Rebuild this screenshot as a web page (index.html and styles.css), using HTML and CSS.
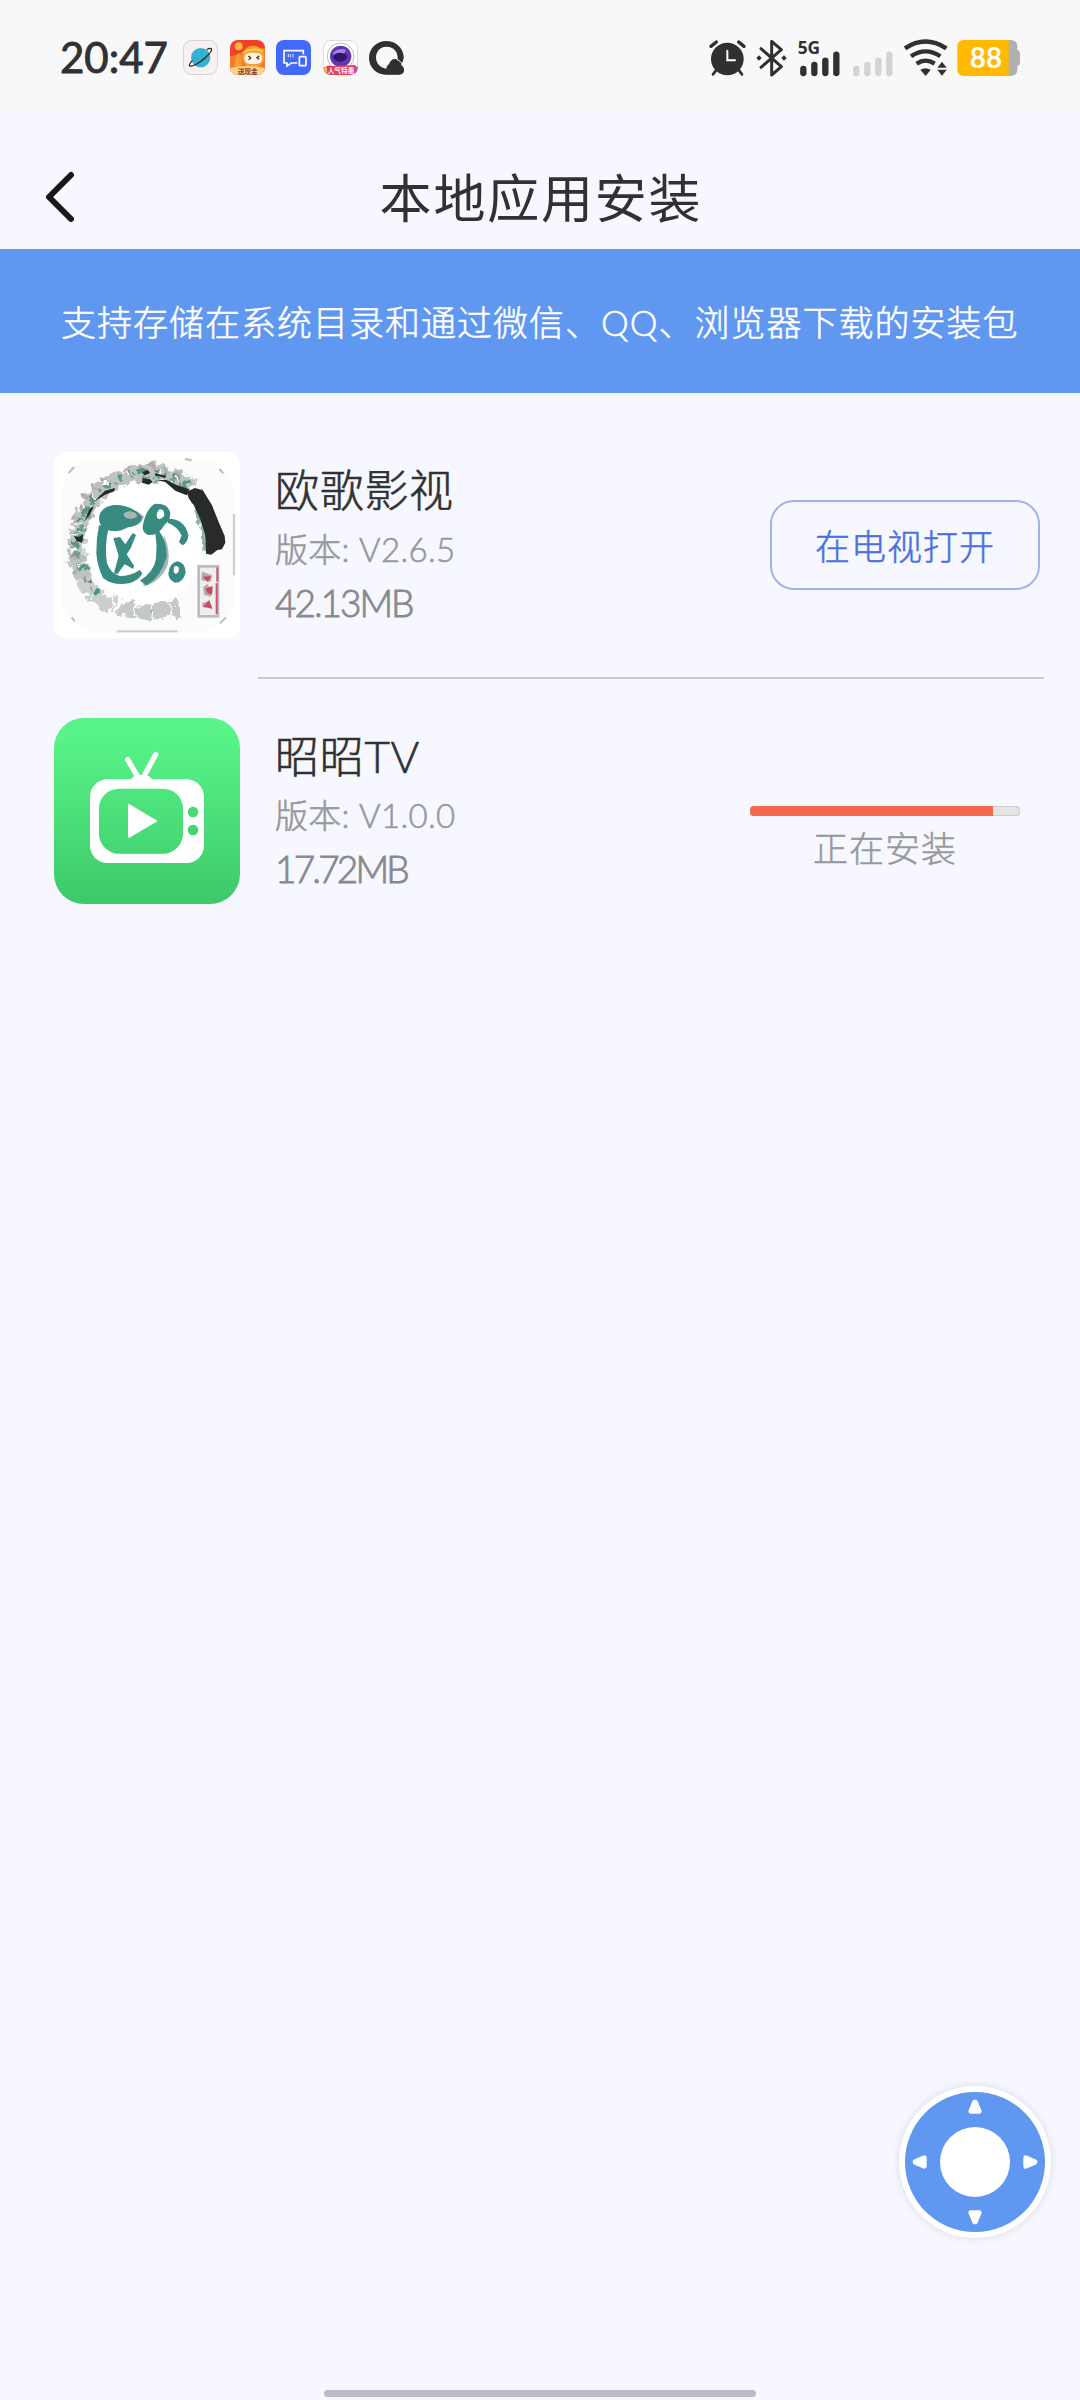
FILE: index.html
```html
<!DOCTYPE html>
<html lang="zh-CN">
<head>
    <meta charset="UTF-8">
    <meta name="viewport" content="width=device-width, initial-scale=1.0">
    <title>本地应用安装</title>
    <link rel="stylesheet" href="styles.css">
</head>
<body>
    <div class="status-bar">
        <div class="status-left">
            <span class="time">20:47</span>
            <svg class="notif" viewBox="0 0 105 105">
                <rect x="1.5" y="1.5" width="102" height="102" rx="24" fill="#f8f1f0" stroke="#d8d3d3" stroke-width="3"/>
                <circle cx="53" cy="53" r="29" fill="#36b0cf"/>
                <path d="M28 62c-8 9-11 14-8 16 8 3 29-9 46-24 15-14 23-25 19-28-3-2-9 0-14 3" fill="none" stroke="#222" stroke-width="3.5"/>
            </svg>
            <svg class="notif" viewBox="0 0 105 105">
                <defs><clipPath id="r1"><rect width="105" height="105" rx="24"/></clipPath></defs>
                <g clip-path="url(#r1)">
                    <rect width="105" height="105" fill="#f0412b"/>
                    <path d="M0 50l30-10 20-16 55 0v81H0z" fill="#f77a28"/>
                    <circle cx="26" cy="19" r="12" fill="#fdb93c"/>
                    <path d="M12 80c2-20 6-32 14-42 10 8 10 28 6 44z" fill="#fa9a30"/>
                    <circle cx="70" cy="50" r="33" fill="#f9a12f"/>
                    <path d="M40 38q28-18 60-4" fill="none" stroke="#fcd45b" stroke-width="5"/>
                    <rect x="43" y="38" width="54" height="34" rx="17" fill="#fff3e8"/>
                    <path d="M55 48l7 6-6 5M88 47l-7 6 6 5" fill="none" stroke="#4a2b20" stroke-width="4"/>
                    <path d="M0 84q50-12 105 0v21H0z" fill="#fbd491"/>
                    <text x="53" y="101" text-anchor="middle" class="tiny brown">送现金</text>
                </g>
            </svg>
            <svg class="notif" viewBox="0 0 105 105">
                <rect width="105" height="105" rx="24" fill="#4169fb"/>
                <path d="M82 43V32H24v37h9v9l13-9h18" fill="none" stroke="#fff" stroke-width="5"/>
                <path d="M37 42v10M43 42v10M51 42v10" stroke="#c9d5ff" stroke-width="3.5"/>
                <rect x="70" y="50" width="20" height="27" rx="3" fill="none" stroke="#fff" stroke-width="5"/>
            </svg>
            <svg class="notif" viewBox="0 0 105 105">
                <defs><clipPath id="r2"><rect width="105" height="105" rx="24"/></clipPath></defs>
                <g clip-path="url(#r2)">
                    <rect x="1" y="1" width="103" height="103" rx="24" fill="#fff" stroke="#d5d5d5" stroke-width="3"/>
                    <circle cx="53" cy="49" r="40" fill="#fff" stroke="#b9b9c4" stroke-width="3"/>
                    <circle cx="53" cy="49" r="32" fill="#6237ad"/>
                    <ellipse cx="51" cy="50" rx="20" ry="15" fill="#2c1769"/>
                    <path d="M30 39q16-17 39-10l-5 12q-18-7-32 4z" fill="#a783e8"/>
                    <path d="M5 82q10-8 22-4l70-3q5 8 8 30H0z" fill="#e83d5f"/>
                    <path d="M0 80l12 2v23H0z" fill="#f6ae57"/>
                    <path d="M93 80h12v25H93z" fill="#c84bb1"/>
                    <text x="54" y="99" text-anchor="middle" class="tiny white">人气特惠</text>
                </g>
            </svg>
            <svg class="notif" viewBox="0 0 105 105">
                <path d="M52 3C24 3 0 24 0 54c0 29 23 50 51 50h40c18 0 18-22 5-29 6-10 9-19 8-27C101 21 78 3 52 3z" fill="#303030"/>
                <path d="M52 20c-18 0-31 14-31 32 0 20 15 33 31 34 1-6 3-10 8-13 3-12 13-18 22-15l4 2c2-24-11-40-34-40z" fill="#f8f8f8"/>
                <path d="M84 58q12 6 17 16" fill="none" stroke="#f8f8f8" stroke-width="3"/>
                <path d="M41 103c3-8 10-10 16-10 0-13 3-20 12-26 9-5 17 0 20 9 9 1 14 8 14 15 0 8-6 12-13 12z" fill="#303030"/>
            </svg>
        </div>
        <!-- viewBox units are a third of a pixel -->
        <svg class="status-right" viewBox="54 54 939 120">
            <g fill="none" stroke="#303030" stroke-linecap="round">
                <circle cx="112" cy="117" r="49" fill="#303030" stroke="none"/>
                <path d="M63 79l16-13M146 66l16 13" stroke-width="10"/>
                <path d="M78 151l-9 12M147 151l9 12" stroke-width="8"/>
                <path d="M112 92v29h23" stroke="#fff" stroke-width="6"/>
                <path d="M213 86l61 54-29 25V64l29 25-61 53" stroke-width="9" stroke-linejoin="round"/>
                <path d="M340 147v12M373 135v24M406 122v37M439 104v55" stroke-width="19"/>
                <path d="M499 147v12M532 135v24M565 122v37M598 104v55" stroke="#d3d3d3" stroke-width="19"/>
                <path d="M645 85q61-41 124 0M663 109q44-30 88 0M680 131q26-18 54 0" stroke-width="13" stroke-linecap="butt"/>
            </g>
            <g fill="#303030">
                <path d="M199 114l8-8 8 8-8 8zM274 114l8-8 8 8-8 8z"/>
                <path d="M691 149q15-9 31 0l-15 19z"/>
                <path d="M742 143l14-18 14 18zM742 149h28l-14 18z"/>
                <text x="323" y="101" class="net">5G</text>
            </g>
            <path d="M950 60h12q20 0 20 20v10q8 2 8 10v28q0 8-8 10v10q0 20-20 20h-12z" fill="#b0b0b0"/>
            <path d="M822 60h134v108H822q-20 0-20-20V80q0-20 20-20z" fill="#ffb900"/>
            <text x="888" y="144" text-anchor="middle" class="level">88</text>
        </svg>
    </div>

    <div class="header">
        <svg class="back" viewBox="0 0 32 52"><path d="M27 4L5 26l22 22"/></svg>
        <h1>本地应用安装</h1>
    </div>

    <div class="banner">支持存储在系统目录和通过微信、QQ、浏览器下载的安装包</div>

    <div class="app-list">
        <div class="app">
            <svg class="app-icon" viewBox="42 66 558 558">
                <defs>
                    <filter id="rough" x="-10%" y="-10%" width="120%" height="120%" color-interpolation-filters="sRGB">
                        <feTurbulence type="fractalNoise" baseFrequency="0.045" numOctaves="2" seed="4"/>
                        <feDisplacementMap in="SourceGraphic" scale="40" xChannelSelector="R" yChannelSelector="G"/>
                    </filter>
                </defs>
                <rect x="42" y="66" width="558" height="558" rx="36" fill="#fff"/>
                <rect x="64" y="86" width="520" height="520" rx="110" fill="#fbfbfb"/>
                <circle cx="315" cy="340" r="180" fill="#fff"/>
                <!-- ink ring -->
                <g fill="none" filter="url(#rough)">
                    <path d="M455 170C370 108 250 115 175 190C105 265 90 370 130 450" stroke="#bcc4c1" stroke-width="50"/>
                    <path d="M130 450C160 500 190 520 225 525" stroke="#cbcecd" stroke-width="46" stroke-dasharray="54 5"/>
                    <path d="M240 532Q330 562 415 530" stroke="#c4c8c6" stroke-width="46" stroke-dasharray="46 6"/>
                    <path d="M450 160C360 105 250 110 170 190C105 265 95 350 120 410" stroke="#5b9388" stroke-width="18" stroke-dasharray="16 20 26 14 8 22"/>
                    <path d="M430 170C350 125 240 125 180 190C125 250 110 340 130 430" stroke="#6d9e94" stroke-width="12" stroke-dasharray="12 18 20 26"/>
                    <path d="M420 138C340 95 240 98 160 170C90 250 80 340 110 440" stroke="#b9a8ae" stroke-width="14" stroke-dasharray="14 26 8 30"/>
                    <path d="M130 410Q155 470 185 500" stroke="#4e9385" stroke-width="12" stroke-dasharray="12 30"/>
                    <path d="M110 370Q120 440 170 490M330 545l20-10" stroke="#8f9c98" stroke-width="8" stroke-dasharray="14 24"/>
                    <path d="M455 195Q490 260 498 365" stroke="#8fb0a9" stroke-width="20"/>
                    <path d="M150 190l18 16M100 275l26 12M250 125l20 10M190 165l14-14M85 355l30 10M120 400l24-6M350 125l14 12M400 145l10 14M90 315l20-8M130 235l-12-16" stroke="#fff" stroke-width="6"/>
                </g>
                <path d="M440 196l-34-14-30-26-26-6 30 0 28 14 40 14zM330 148l-22-4-2 14 20 6 12-8zM225 174l-30 8-34 34 34-22 28-10zM160 228l-12 10-14 36 14-18 12-22zM102 318l8 14 16 6 4-26-12 8zM345 130l34 8-4 6-30-8zM306 126l18-6 6 10-16 6z" fill="#252928"/>
                <path d="M440 186l24-12 24 6 28 46 20 50 18 42 2 20-10 20-14 2-18 14-16-3-2-55-14-45-20-45-15-20z" fill="#292b2b"/>
                <!-- character -->
                <g fill="#a9b5b1" transform="translate(7 6)">
                    <path d="M177 262q8-36 50-38 46 0 78 30-8 28-45 32-50 22-78 0z"/>
                    <path d="M365 310q20 45 12 85-18 52-72 68l-5-16q42-22 55-65z"/>
                </g>
                <g fill="#378b80">
                    <path fill-rule="evenodd" d="M177 268q0-36 45-43 50-2 84 35-2 26-45 32-25 18-58 8-25-8-26-32zM251 254q4 14 26 12 16-4 14-10-6-14-26-12-14 4-14 10z"/>
                    <path d="M177 285l28 10q-12 60-4 105 12 32 38 38 34 0 60-18l8 10q-10 22-40 30-48 8-78-16-18-38-20-75 0-45 8-84z"/>
                    <path d="M220 325l20-4 16 22 22-34 10 6-16 40-12 18 22 34-2 10-26-14-22 30-10-4 14-52z"/>
                    <path fill-rule="evenodd" d="M308 290q8-50 35-68 42-4 48 28 0 22-18 35-16 32-48 30-18-6-17-25zM358 238q-14 18-4 28 10 4 18-8 4-20-14-20z"/>
                    <path d="M385 266q48 0 60 48 0 22-18 32l-10-10 8-20q-12-26-42-38z"/>
                    <path d="M358 304q22 30 22 76-16 58-60 86l-20-14q42-28 48-66 4-40-2-78z"/>
                    <path fill-rule="evenodd" d="M385 430q4-32 28-36 24 6 24 34-8 30-32 30-20-8-20-28zM402 412q-4 18 6 20 12-6 8-20-8-8-14 0z"/>
                </g>
                <!-- seal -->
                <rect x="476" y="409" width="58" height="150" fill="#eee" stroke="#bcbcbc" stroke-width="8"/>
                <path d="M532 412v42M530 460v92" stroke="#cf5864" stroke-width="6"/>
                <path d="M486 425l30 10-4 20-28-4zM490 470l12-8 16 22-6 16-20-6zM486 520l22-8 10 24-30-4z" fill="#b3a9ab"/>
                <path d="M488 440l26-2-10 18zM496 476l22-8-2 26-14-6zM490 530l18-20 8 26-14-4z" fill="#c9485b"/>
                <path d="M230 604h183M582 252v184" stroke="#cfcfcf" stroke-width="7"/>
                <path d="M86 129l16-18M538 117l12 13M540 580l18-18M95 562l9 12M435 87l20 4" stroke="#b9bfbd" stroke-width="6"/>
            </svg>
            <div class="app-info">
                <div class="app-name">欧歌影视</div>
                <div class="app-version">版本: V2.6.5</div>
                <div class="app-size">42.13MB</div>
            </div>
            <button class="open-btn">在电视打开</button>
        </div>

        <div class="divider"></div>

        <div class="app">
            <svg class="app-icon" viewBox="42 54 558 558">
                <defs>
                    <linearGradient id="green" gradientUnits="userSpaceOnUse" x1="0" y1="54" x2="0" y2="612">
                        <stop offset="0.1" stop-color="#58f389"/>
                        <stop offset="1" stop-color="#3dc969"/>
                    </linearGradient>
                </defs>
                <rect x="42" y="54" width="558" height="558" rx="90" fill="url(#green)"/>
                <path d="M263 179l32 54M347 164l-36 66" stroke="#fff" stroke-width="16" stroke-linecap="round"/>
                <path d="M271 240q8-14 25-15h17q17 1 25 15z" fill="#fff"/>
                <rect x="150" y="238" width="342" height="251" rx="52" fill="#fff"/>
                <rect x="177" y="266" width="252" height="195" rx="60" fill="url(#green)"/>
                <path d="M267 315v96l81-48z" fill="#fff" stroke="#fff" stroke-width="6" stroke-linejoin="round"/>
                <circle cx="459" cy="336" r="16" fill="#47d977"/>
                <circle cx="459" cy="390" r="16" fill="#44d474"/>
            </svg>
            <div class="app-info">
                <div class="app-name">昭昭TV</div>
                <div class="app-version">版本: V1.0.0</div>
                <div class="app-size narrow">17.72MB</div>
            </div>
            <div class="installing">
                <div class="progress"><div class="progress-fill" style="width: 90%"></div></div>
                <div class="progress-text">正在安装</div>
            </div>
        </div>
    </div>

    <!-- floating remote control -->
    <svg class="remote" viewBox="57 79 456 456">
        <circle cx="285" cy="307" r="228" fill="#fff"/>
        <circle cx="285" cy="307" r="210" fill="#5f97f1"/>
        <circle cx="285" cy="307" r="105" fill="#fff"/>
        <g fill="#fff" stroke="#fff" stroke-width="14" stroke-linejoin="round">
            <path id="arrow" d="M284 127h2l12 28h-26z"/>
            <use href="#arrow" transform="rotate(90 285 307)"/>
            <use href="#arrow" transform="rotate(180 285 307)"/>
            <use href="#arrow" transform="rotate(270 285 307)"/>
        </g>
    </svg>
    <div class="home-bar"></div>
</body>
</html>
```

FILE: styles.css
```css
* {
    box-sizing: border-box;
}

body {
    margin: 0;
    height: 2400px;
    position: relative;
    background-color: #f7f8ff;
    font-family: Lato, "Noto Sans CJK SC", sans-serif;
    color: #303133;
    overflow: hidden;
}

.status-bar {
    display: flex;
    justify-content: space-between;
    height: 114px;
    padding: 38px 59px 0 60px;
    background-color: #f8f8f8;
}

.status-left {
    display: flex;
    gap: 11.5px;
    padding-top: 2px;
}

.time {
    width: 111.5px;
    font-size: 42px;
    font-weight: 400;
    -webkit-text-stroke: 0.9px;
    line-height: 34px;
    white-space: nowrap;
}

.notif {
    width: 35px;
    height: 35px;
}

.tiny {
    font: bold 20px "Noto Sans CJK SC", sans-serif;
}

.brown {
    fill: #8b3a1c;
}

.white {
    fill: #fff;
}

.status-right {
    width: 313px;
    height: 40px;
    overflow: visible;
}

.net {
    font: bold 52px "Noto Sans", sans-serif;
}

.level {
    font: bold 84px Lato, sans-serif;
    fill: #fff;
}

.header {
    display: flex;
    align-items: center;
    height: 135px;
    padding: 33px 44px 0;
}

.back {
    width: 32px;
    height: 52px;
    margin-top: -2px;
    fill: none;
    stroke: #17181a;
    stroke-width: 6;
    stroke-linecap: round;
    stroke-linejoin: round;
}

.header h1 {
    flex: 1;
    margin: 0 30px 0 0;
    text-align: center;
    font-size: 52px;
    font-weight: 400;
    letter-spacing: 1.8px;
    line-height: 60px;
}

.banner {
    height: 144px;
    padding-left: 61px;
    background-color: #5f97f1;
    color: #fff;
    font-size: 35px;
    font-weight: 300;
    -webkit-text-stroke: 0.5px;
    letter-spacing: 1px;
    line-height: 146px;
    white-space: nowrap;
}

.app-list {
    padding: 59px 36px 0 54px;
}

.app {
    display: flex;
    align-items: center;
    height: 186px;
}

.app-icon {
    width: 186px;
    height: 186px;
}

.app-info {
    flex: 1;
    margin: -3px 0 0 35px;
    white-space: nowrap;
    font-weight: 300;
    -webkit-text-stroke: 0.6px;
}

.app-name {
    font-size: 44px;
    line-height: 64px;
    letter-spacing: 0.7px;
}

.app-version {
    font-size: 33px;
    line-height: 54px;
    letter-spacing: 0.3px;
    color: #98999c;
}

.app-size {
    font-size: 37px;
    line-height: 54px;
    letter-spacing: -2px;
    color: #888a8d;
    -webkit-text-stroke: 0.9px;
}

.narrow {
    letter-spacing: -2.8px;
}

.open-btn {
    width: 270px;
    height: 90px;
    margin-right: 4px;
    padding: 0 0 2px;
    border: 2px solid #a1b4e6;
    border-radius: 24px;
    background: none;
    color: #4a70df;
    font-family: inherit;
    font-size: 35px;
    font-weight: 300;
    -webkit-text-stroke: 0.5px;
    letter-spacing: 1px;
}

.divider {
    height: 2px;
    margin: 39px 0 39px 204px;
    background-color: #c9cad1;
}

.installing {
    width: 270px;
    margin-right: 24px;
    padding-top: 57px;
    text-align: center;
}

.progress {
    height: 10px;
    border-radius: 4px;
    background-color: #e4e4e4;
    box-shadow: inset 0 0 0 1px #ccc;
    overflow: hidden;
}

.progress-fill {
    height: 100%;
    background-color: #f6674e;
}

.progress-text {
    margin-top: 6px;
    font-size: 35px;
    font-weight: 300;
    -webkit-text-stroke: 0.5px;
    letter-spacing: 1px;
    line-height: 52px;
    color: #98999c;
}

.remote {
    position: absolute;
    left: 899px;
    top: 2086px;
    width: 152px;
    height: 152px;
    border-radius: 50%;
    box-shadow: 0 0 8px rgba(0, 0, 0, 0.12);
}

.home-bar {
    position: absolute;
    left: 324px;
    bottom: 3px;
    width: 432px;
    height: 7px;
    border-radius: 4px;
    background-color: #babbc3;
}
```
